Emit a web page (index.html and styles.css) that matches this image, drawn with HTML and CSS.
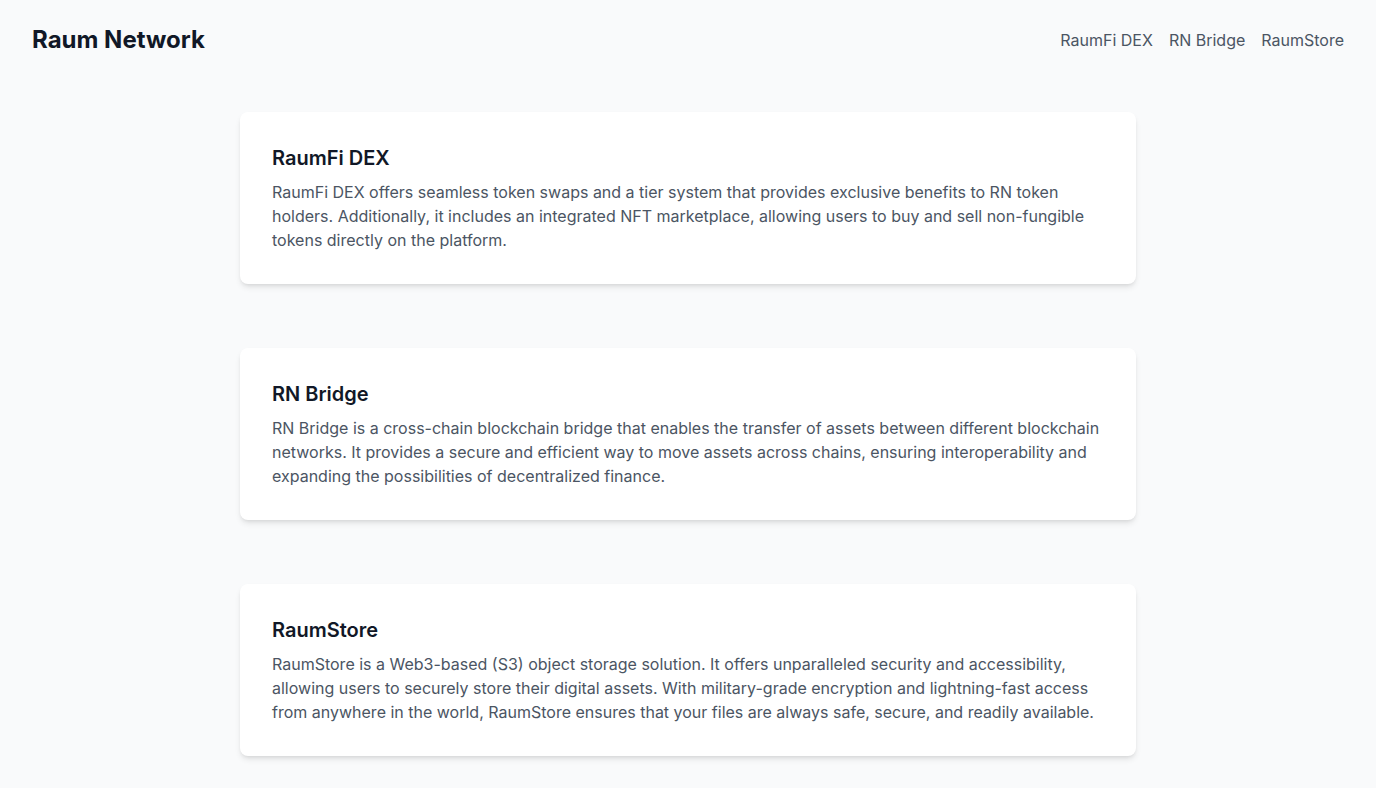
FILE: index.html
```html
<!DOCTYPE html>
<html lang="en">
<head>
<meta charset="utf-8">
<title>Raum Network</title>
<link rel="stylesheet" href="styles.css">
</head>
<body>
<header class="header">
  <div class="brand">Raum Network</div>
  <nav class="nav">
    <a href="#dex">RaumFi DEX</a>
    <a href="#bridge">RN Bridge</a>
    <a href="#store">RaumStore</a>
  </nav>
</header>
<main class="main">
  <section class="card" id="dex">
    <h2>RaumFi DEX</h2>
    <p>RaumFi DEX offers seamless token swaps and a tier system that provides exclusive benefits to RN token holders. Additionally, it includes an integrated NFT marketplace, allowing users to buy and sell non-fungible tokens directly on the platform.</p>
  </section>
  <section class="card" id="bridge">
    <h2>RN Bridge</h2>
    <p>RN Bridge is a cross-chain blockchain bridge that enables the transfer of assets between different blockchain networks. It provides a secure and efficient way to move assets across chains, ensuring interoperability and expanding the possibilities of decentralized finance.</p>
  </section>
  <section class="card" id="store">
    <h2>RaumStore</h2>
    <p>RaumStore is a Web3-based (S3) object storage solution. It offers unparalleled security and accessibility, allowing users to securely store their digital assets. With military-grade encryption and lightning-fast access from anywhere in the world, RaumStore ensures that your files are always safe, secure, and readily available.</p>
  </section>
</main>
</body>
</html>
```
FILE: styles.css
```css
* { box-sizing: border-box; }
html, body { margin: 0; padding: 0; }
body {
  background: #f9fafb;
  font-family: Inter, "Noto Sans", sans-serif;
  color: #111827;
  min-height: 100vh;
}
.header {
  display: flex;
  justify-content: space-between;
  align-items: center;
  padding: 24px 32px;
}
.brand {
  font-size: 24px;
  line-height: 32px;
  font-weight: 700;
  color: #111827;
}
.nav {
  display: flex;
  gap: 16px;
}
.nav a {
  color: #4b5563;
  text-decoration: none;
  font-size: 16px;
  line-height: 24px;
}
.main {
  width: 896px;
  margin: 32px auto 0;
  display: flex;
  flex-direction: column;
  gap: 64px;
}
.card {
  background: #fff;
  border-radius: 8px;
  padding: 32px;
  box-shadow: 0 4px 6px -1px rgba(0,0,0,0.1), 0 2px 4px -2px rgba(0,0,0,0.1);
}
.card h2 {
  margin: 0 0 8px;
  font-size: 20px;
  line-height: 28px;
  font-weight: 600;
  color: #111827;
}
.card p {
  margin: 0;
  font-size: 16px;
  line-height: 24px;
  color: #4b5563;
}
```
